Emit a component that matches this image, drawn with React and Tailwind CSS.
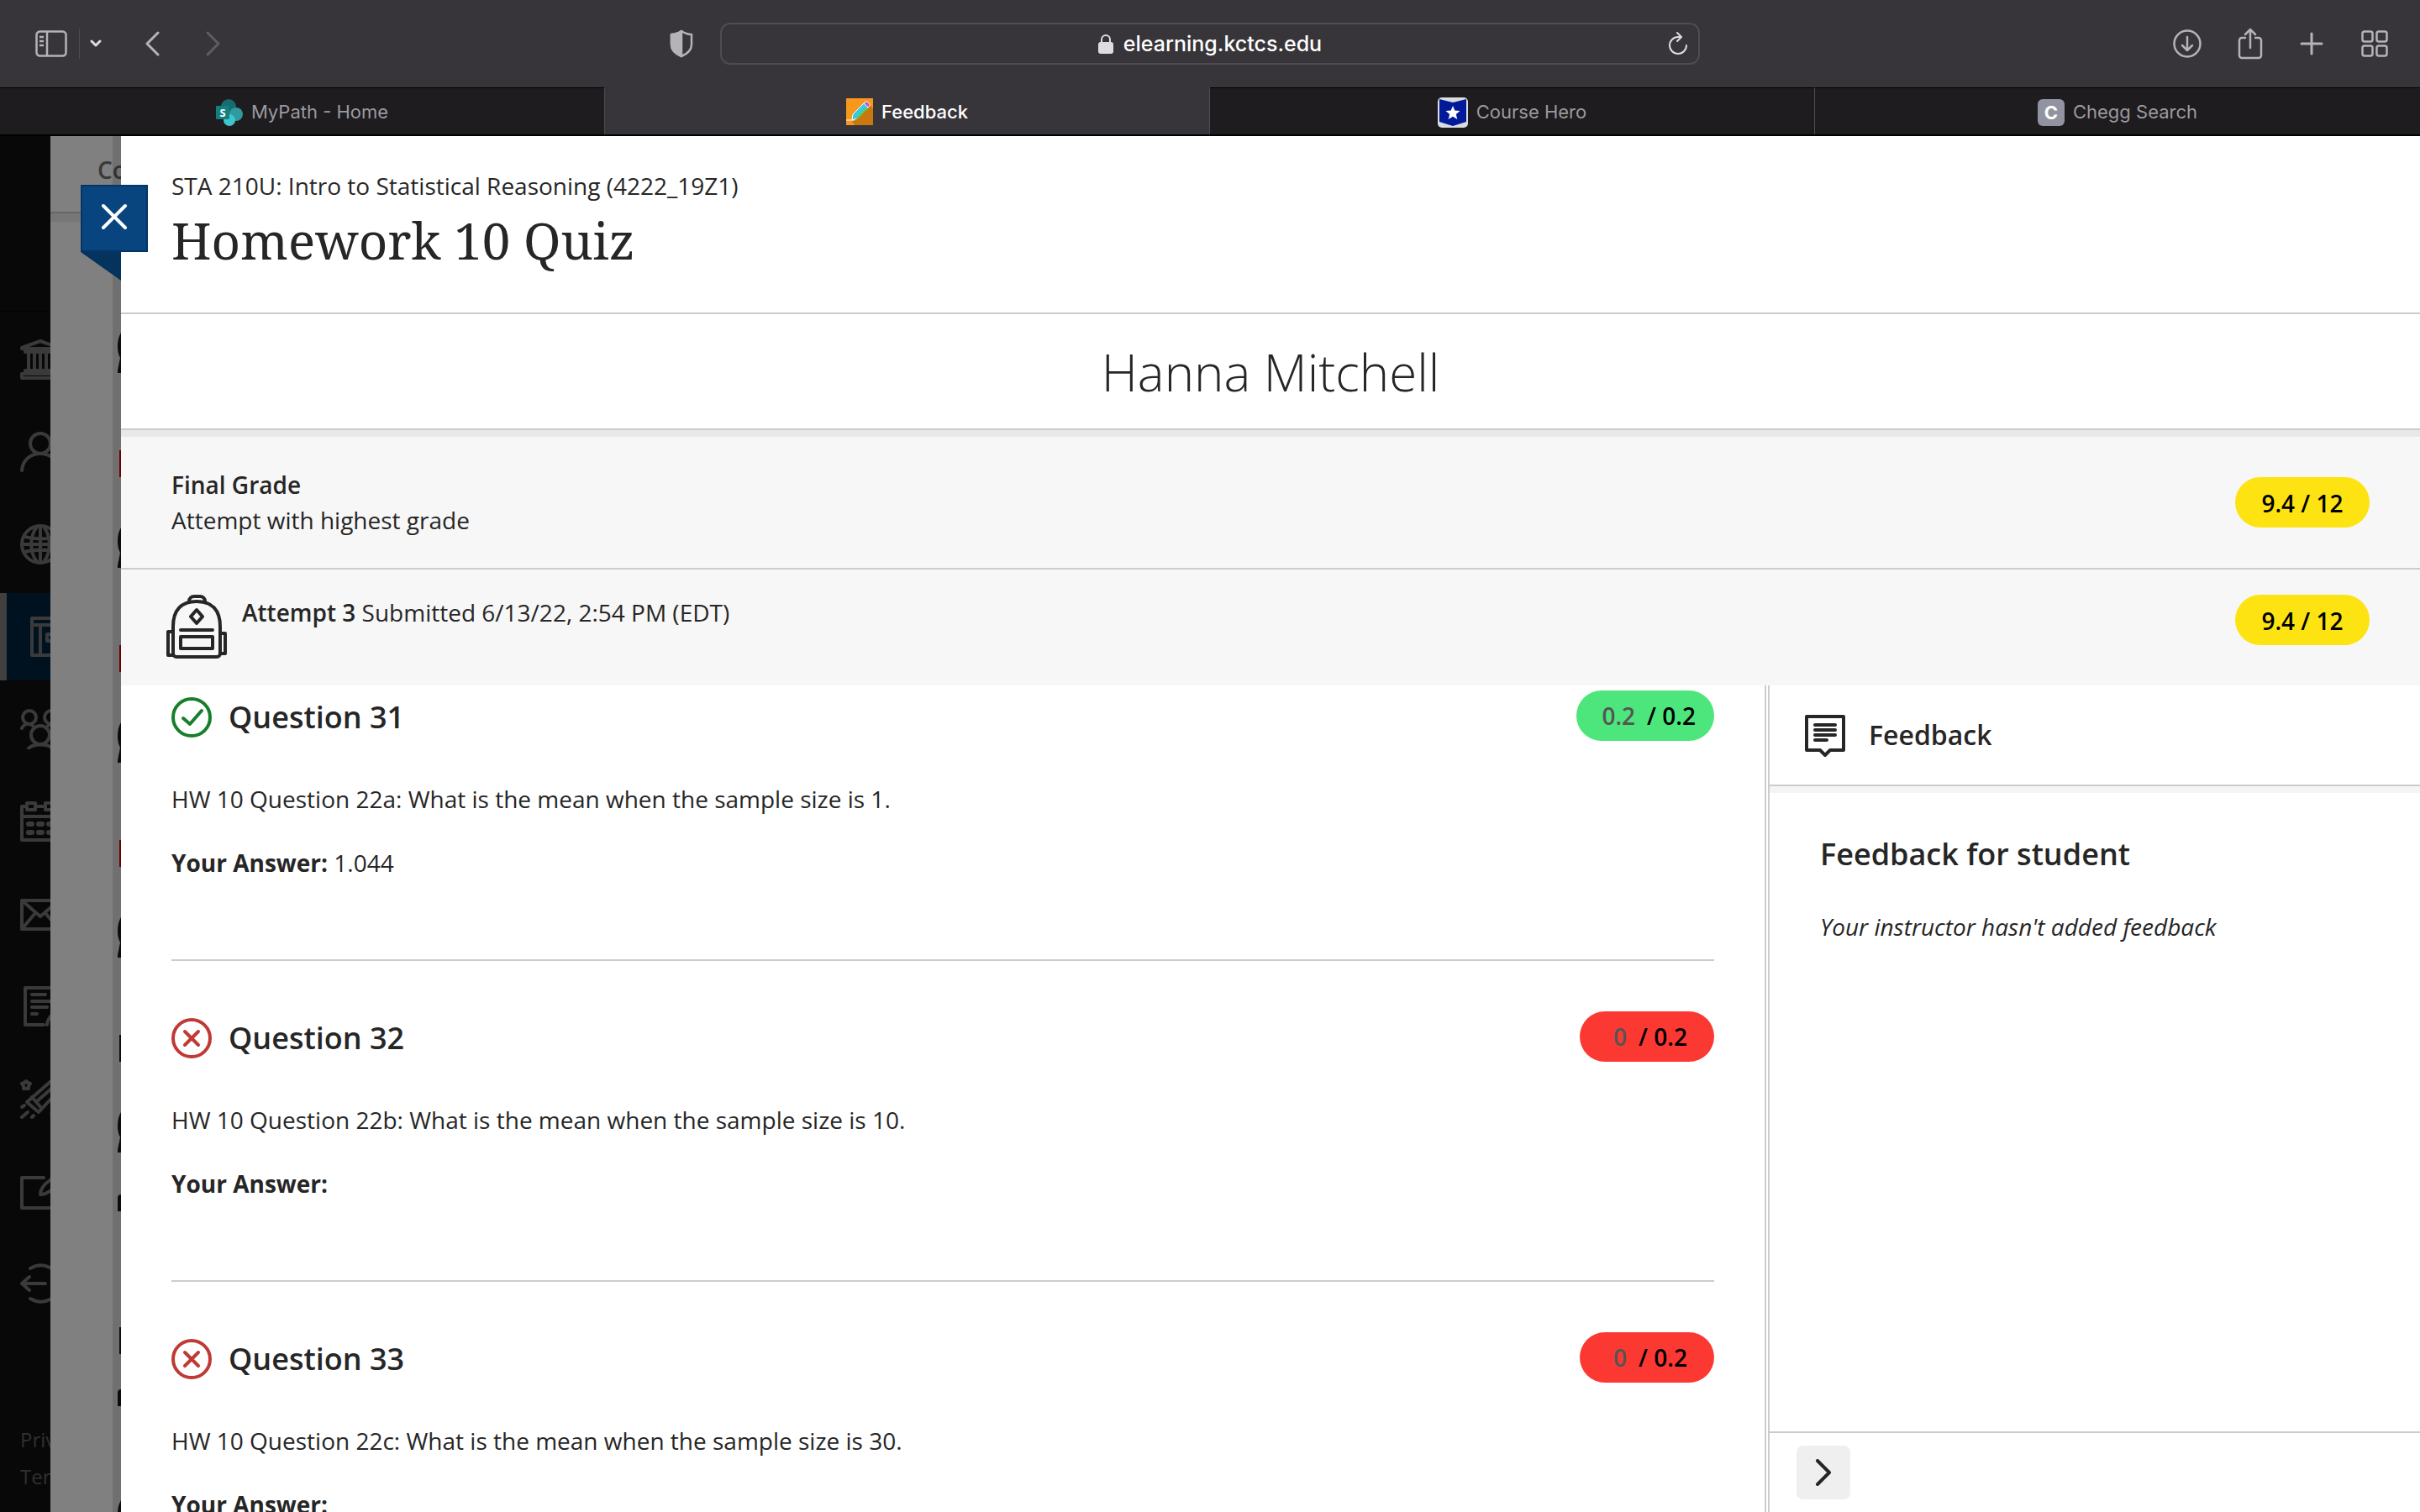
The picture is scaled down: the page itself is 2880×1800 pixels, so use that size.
import React from 'react';

const tabs = [
  { title: 'MyPath - Home', icon: SharePointIcon },
  { title: 'Feedback', icon: PencilIcon, active: true },
  { title: 'Course Hero', icon: CourseHeroIcon },
  { title: 'Chegg Search', icon: CheggIcon },
];

const questions = [
  { number: 31, text: 'HW 10 Question 22a: What is the mean when the sample size is 1.', answer: '1.044', score: '0.2', correct: true },
  { number: 32, text: 'HW 10 Question 22b: What is the mean when the sample size is 10.', answer: '', score: '0', correct: false },
  { number: 33, text: 'HW 10 Question 22c: What is the mean when the sample size is 30.', answer: '', score: '0', correct: false },
];

const navItems = [
  {
    label: 'Institution Page',
    icon: (
      <>
        <path d="M2 10 24 2l22 8v1H2zM6 11v4h36v-4M10 15v22M17 15v22M24 15v22M31 15v22M38 15v22M6 37h36v4M6 37v4M2 41h44v5H2z" />
      </>
    ),
  },
  {
    label: 'Profile',
    icon: (
      <>
        <circle cx="24" cy="14" r="12" />
        <path d="M2 46c1-12 10-20 22-20s21 8 22 20" />
      </>
    ),
  },
  {
    label: 'Activity Stream',
    icon: (
      <>
        <circle cx="24" cy="24" r="22" />
        <path d="M24 2v44M2 24h44M5 15c12 3 26 3 38 0M5 33c12-3 26-3 38 0M20 3c-9 12-9 30 0 42M28 3c9 12 9 30 0 42" />
      </>
    ),
  },
  {
    label: 'Courses',
    active: true,
    icon: <path d="M2 2h40v44H2zM2 10h40M12 10v36M42 21H20v8h22" />,
  },
  {
    label: 'Organizations',
    icon: (
      <>
        <circle cx="11" cy="10" r="8" />
        <circle cx="37" cy="10" r="8" />
        <circle cx="24" cy="31" r="11" />
        <path d="M2 23c2-5 8-7 13-3M46 23c-2-5-8-7-13-3M10 47c5-6 23-6 28 0" />
      </>
    ),
  },
  {
    label: 'Calendar',
    icon: (
      <>
        <path d="M2 6h6M18 6h12M40 6h6v40H2V6M2 18h44M8 2h10v8H8zM30 2h10v8H30z" />
        <path d="M10 27h4M22 27h4M34 27h4M10 37h4M22 37h4M34 37h4" strokeWidth="6" />
      </>
    ),
  },
  {
    label: 'Messages',
    icon: <path d="M2 8h44v34H2zM2 8l22 19L46 8M2 42l16-19M46 42 30 23" />,
  },
  {
    label: 'Grades',
    icon: <path d="M28 46H6V2h34v20M14 10h16M14 18h22M14 25h18M14 33h6M32 46c0-6 4-10 8-14" />,
  },
  {
    label: 'Assist',
    icon: (
      <>
        <path d="M8 28 38 2l10 10-26 28zM14 22l12 14M20 27 44 6" />
        <path d="m7 3 2 2 3 1-2 3v3H4V9L2 6l3-1z" />
        <path d="m2 34 3-2M2 46l7-6M14 46l2-2M38 38c0 4-2 8 2 9" />
      </>
    ),
  },
  {
    label: 'Tools',
    icon: <path d="M28 8H2v36h40V28M24 28c0-8 8-16 20-22l4 4C40 22 32 28 24 28z" />,
  },
  {
    label: 'Sign Out',
    icon: <path d="M12 6c16-9 34 0 34 18S28 51 12 42M30 24H2M11 16 2 24l9 8" />,
  },
];

// edges of the course list that peek out from under the open panel
const listEdges = [
  { type: 'ribbon', space: 'mt-[234px]' },
  { type: 'late', space: 'mt-[92px]' },
  { type: 'ribbon', space: 'mt-[60px]' },
  { type: 'late', space: 'mt-[92px]' },
  { type: 'ribbon', space: 'mt-[60px]' },
  { type: 'late', space: 'mt-[92px]' },
  { type: 'ribbon', space: 'mt-[60px]' },
  { type: 'bar', space: 'mt-[92px]' },
  { type: 'ribbon', space: 'mt-[60px]' },
  { type: 'foot', space: 'mt-[50px]' },
  { type: 'bar', space: 'mt-[138px]' },
  { type: 'foot', space: 'mt-[42px]' },
  { type: 'ribbon', space: 'mt-[112px]' },
];

function SharePointIcon() {
  return (
    <svg width="32" height="32" viewBox="0 0 32 32" aria-hidden="true">
      <circle cx="15" cy="9" r="9" fill="#166c6f" />
      <circle cx="24" cy="18" r="8" fill="#2f9a9f" />
      <circle cx="16" cy="25" r="7" fill="#3fc5cf" />
      <rect x="0" y="8" width="16" height="16" rx="1" fill="#12807f" />
      <text x="8" y="21" textAnchor="middle" fontSize="13" fontWeight="700" fill="#fff" fontFamily="Open Sans, sans-serif">S</text>
    </svg>
  );
}

function PencilIcon() {
  return (
    <svg width="32" height="32" viewBox="0 0 32 32" aria-hidden="true">
      <path d="M0 0h32v32H0z" fill="#f7981d" />
      <path d="M28 8 32 12v20H10L6 26z" fill="#c9770f" />
      <path d="m8 19 13-13 5 5-13 13-6 2z" fill="#35c8e8" stroke="#fff" strokeWidth="1" />
      <path d="m11 23 13-13 2 2-13 13z" fill="#4fd06b" />
      <path d="m21 6 2-2c2-1 6 3 5 5l-2 2z" fill="#c25bc8" stroke="#fff" strokeWidth="1" />
      <path d="M0 26h10" stroke="#fff" strokeWidth="1" />
    </svg>
  );
}

function CourseHeroIcon() {
  return (
    <svg width="36" height="36" viewBox="0 0 36 36" aria-hidden="true">
      <rect width="36" height="36" rx="5" fill="#dcdcde" />
      <path d="M2 2 18 6l16-4v27l-16 5-16-5z" fill="#001a99" />
      <path d="m18 10 2.300 5.500 6.200.4-4.700 4 1.500 6.100-5.300-3.300-5.300 3.300 1.500-6.100-4.700-4 6.200-.4z" fill="#fff" />
    </svg>
  );
}

function CheggIcon() {
  return (
    <span className="flex h-8 w-8 items-center justify-center rounded-md bg-[#9293a0] text-[22px] font-bold leading-8 text-white">C</span>
  );
}

function BrowserToolbar() {
  return (
    <div className="grid h-[104px] grid-cols-[1fr_1166px_1fr] items-center text-[#b5b3b8]">
      <div className="flex items-center pl-[42px] pr-8">
        <button aria-label="Show sidebar">
          <svg width="38" height="32" viewBox="0 0 38 32" fill="none" stroke="currentColor" strokeWidth="2.500">
            <rect x="1.500" y="1.500" width="35" height="29" rx="4" />
            <path d="M14 2v28M5 8h5M5 13h5M5 18h5" />
          </svg>
        </button>
        <span className="ml-[14px] h-9 w-px bg-[#4e4c51]" />
        <button aria-label="Tab groups" className="ml-3 text-[#dddce0]">
          <svg width="14" height="10" viewBox="0 0 14 10" fill="none" stroke="currentColor" strokeWidth="3" strokeLinecap="round" strokeLinejoin="round">
            <path d="m2 2 5 5 5-5" />
          </svg>
        </button>
        <button aria-label="Back" className="ml-[52px]">
          <svg width="17" height="30" viewBox="0 0 17 30" fill="none" stroke="currentColor" strokeWidth="3" strokeLinecap="round" strokeLinejoin="round">
            <path d="M15 2 2 15l13 13" />
          </svg>
        </button>
        <button aria-label="Forward" className="ml-[55px] text-[#5f5d62]">
          <svg width="17" height="30" viewBox="0 0 17 30" fill="none" stroke="currentColor" strokeWidth="3" strokeLinecap="round" strokeLinejoin="round">
            <path d="m2 2 13 13L2 28" />
          </svg>
        </button>
        <button aria-label="Privacy report" className="ml-auto">
          <svg width="28" height="34" viewBox="0 0 28 34" fill="none" stroke="currentColor" strokeWidth="2.500" strokeLinejoin="round">
            <path d="M14 2c3 2 7 4 12 4v12c0 7-5 11-12 14C7 29 2 25 2 18V6c5 0 9-2 12-4z" />
            <path d="M14 2v30C7 29 2 25 2 18V6c5 0 9-2 12-4z" fill="currentColor" />
          </svg>
        </button>
      </div>
      <div className="flex h-[50px] items-center rounded-xl border-2 border-[#4e4c51] px-3 text-[#dddce0]">
        <span className="w-6" />
        <div className="flex flex-1 items-center justify-center gap-3">
          <svg width="18" height="24" viewBox="0 0 18 24" aria-hidden="true">
            <path d="M4 11V7a5 5 0 0 1 10 0v4" fill="none" stroke="currentColor" strokeWidth="2" />
            <rect x="0" y="10" width="18" height="14" rx="3" fill="currentColor" />
          </svg>
          <input
            aria-label="Address"
            defaultValue="elearning.kctcs.edu"
            className="field-sizing-content bg-transparent text-[25px] font-medium leading-8 text-white outline-none"
          />
        </div>
        <button aria-label="Reload">
          <svg width="24" height="28" viewBox="0 0 24 28" fill="none" stroke="currentColor" strokeWidth="2" strokeLinecap="round" strokeLinejoin="round">
            <path d="M12 6a10 10 0 1 0 10 10M12 6h3M11 1l5 5-5 5" />
          </svg>
        </button>
      </div>
      <div className="flex items-center justify-end pr-[38px]">
        <button aria-label="Downloads">
          <svg width="34" height="34" viewBox="0 0 34 34" fill="none" stroke="currentColor" strokeWidth="2.500" strokeLinecap="round" strokeLinejoin="round">
            <circle cx="17" cy="17" r="15.500" />
            <path d="M17 9v16M11 19l6 6 6-6" />
          </svg>
        </button>
        <button aria-label="Share" className="ml-[43px]">
          <svg width="30" height="38" viewBox="0 0 30 38" fill="none" stroke="currentColor" strokeWidth="2.500" strokeLinecap="round" strokeLinejoin="round">
            <path d="M9 12H5a3 3 0 0 0-3 3v18a3 3 0 0 0 3 3h20a3 3 0 0 0 3-3V15a3 3 0 0 0-3-3h-4M15 24V2M9 8l6-6 6 6" />
          </svg>
        </button>
        <button aria-label="New tab" className="ml-[44px]">
          <svg width="28" height="28" viewBox="0 0 28 28" fill="none" stroke="currentColor" strokeWidth="3" strokeLinecap="round">
            <path d="M14 2v24M2 14h24" />
          </svg>
        </button>
        <button aria-label="Tab overview" className="ml-[45px]">
          <svg width="32" height="32" viewBox="0 0 32 32" fill="none" stroke="currentColor" strokeWidth="2.500">
            <rect x="1.500" y="1.500" width="12" height="12" rx="2.500" />
            <rect x="18.500" y="1.500" width="12" height="12" rx="2.500" />
            <rect x="1.500" y="18.500" width="12" height="12" rx="2.500" />
            <rect x="18.500" y="18.500" width="12" height="12" rx="2.500" />
          </svg>
        </button>
      </div>
    </div>
  );
}

function TabBar() {
  return (
    <div className="grid h-[58px] grid-cols-4 border-b-2 border-black">
      {tabs.map(({ title, icon: Icon, active }) => (
        <button
          key={title}
          className={
            active
              ? 'flex items-center justify-center gap-2.5 border-r border-[#4e4c51] pt-0.5 text-[22px] font-medium text-white'
              : 'flex items-center justify-center gap-2.5 border-r border-t border-r-[#4e4c51] border-t-black bg-[#1e1c1f] pt-0.5 text-[22px] text-[#9c9a9e] last:border-r-0'
          }
        >
          <Icon />
          <span>{title}</span>
        </button>
      ))}
    </div>
  );
}

function SideNav() {
  return (
    <nav className="flex w-[60px] shrink-0 flex-col overflow-hidden bg-[#080808] text-[#3a3a3a]">
      <div className="h-[210px] shrink-0 border-b-2 border-[#040404]" />
      <ul className="mt-1 space-y-1.5">
        {navItems.map((item) => (
          <li key={item.label}>
            <a
              href="#"
              aria-label={item.label}
              className={
                item.active
                  ? 'flex h-[104px] items-center border-l-8 border-[#404040] bg-[#001120] pl-7'
                  : 'flex h-[104px] items-center pl-6'
              }
            >
              <svg className="shrink-0" width="48" height="48" viewBox="0 0 48 48" fill="none" stroke="currentColor" strokeWidth="4" strokeLinecap="round" strokeLinejoin="round">
                {item.icon}
              </svg>
            </a>
          </li>
        ))}
      </ul>
      <div className="mt-auto flex flex-col pb-5 pl-6 text-2xl leading-[44px] text-[#303030]">
        <a href="#">Priv</a>
        <a href="#">Ter</a>
      </div>
    </nav>
  );
}

function ListEdge({ type, space }) {
  if (type === 'ribbon') {
    return (
      <svg className={`${space} shrink-0`} width="4" height="48" viewBox="0 0 4 48" fill="#0d0c0a" aria-hidden="true">
        <path d="M4 0C1 5 0 10 0 17c0 5 1 9 3 13L0 45v3h4z" />
      </svg>
    );
  }
  if (type === 'late') return <span className={`${space} ml-[2px] h-8 w-[2px] shrink-0 bg-[#6b0000]`} />;
  if (type === 'bar') return <span className={`${space} ml-[2px] h-8 w-[2px] shrink-0 bg-[#0d0c0a]`} />;
  return <span className={`${space} h-5 w-1 shrink-0 rounded-tl bg-[#0d0c0a]`} />;
}

function DimmedSheet() {
  return (
    <div className="relative flex w-[84px] shrink-0 justify-end overflow-hidden bg-[#808080]">
      <div className="absolute inset-x-0 top-0 h-[92px] border-b-2 border-[#666]">
        <span className="block pl-14 pt-[19px] text-[28px] font-semibold leading-[42px] text-[#383838]">Co</span>
      </div>
      <div className="absolute inset-x-0 top-[92px] h-[10px] bg-[#777]" />
      <div className="absolute inset-y-0 right-0 w-[10px] bg-black/12" />
      <div className="relative flex w-1 flex-col overflow-hidden">
        {listEdges.map((edge, i) => (
          <ListEdge key={i} {...edge} />
        ))}
      </div>
    </div>
  );
}

function CloseButton() {
  return (
    <button aria-label="Close" className="absolute -left-12 top-[58px] z-10">
      <svg width="80" height="114" viewBox="0 0 80 114">
        <path d="M0 80h48v34z" fill="#04335e" />
        <rect x="1" y="1" width="78" height="78" fill="#08457f" stroke="#053565" strokeWidth="2" />
        <path d="m27 25 26 26M53 25 27 51" fill="none" stroke="#fff" strokeWidth="4" strokeLinecap="round" />
      </svg>
    </button>
  );
}

function GradePill() {
  return (
    <span className="flex h-[60px] w-40 items-center justify-center rounded-full bg-[#fde311] pt-0.5 text-[28px] font-semibold text-black">
      9.4 / 12
    </span>
  );
}

function Question({ number, text, answer, score, correct }) {
  return (
    <article className="border-b-2 border-[#ccc] pb-[94px] pt-[60px] first:pt-1.5">
      <div className="flex items-center">
        <div className="flex items-center gap-5 pt-[3px]">
          <svg
            className={correct ? 'text-[#177f2c]' : 'text-[#c03a35]'}
            width="48"
            height="48"
            viewBox="0 0 48 48"
            fill="none"
            stroke="currentColor"
            strokeWidth="4"
            strokeLinecap="round"
            strokeLinejoin="round"
          >
            <circle cx="24" cy="24" r="22" />
            {correct ? <path d="m14 25 8 7 14-16" /> : <path d="m16 16 16 16M32 16 16 32" />}
          </svg>
          <h3 className="text-4xl font-semibold leading-[50px]">Question {number}</h3>
        </div>
        <div
          className={
            correct
              ? 'ml-auto flex h-[60px] min-w-40 items-center justify-center gap-3.5 rounded-full bg-[#4de67c] pl-[30px] pr-[22px] text-[28px] font-semibold text-black'
              : 'ml-auto flex h-[60px] min-w-40 items-center justify-center gap-3.5 rounded-full bg-[#fc3832] pl-[30px] pr-[22px] text-[28px] font-semibold text-black'
          }
        >
          <span className="text-[#555]">{score}</span>
          <span>/ 0.2</span>
        </div>
      </div>
      <p className="mt-12 text-[28px] leading-[42px]">{text}</p>
      <p className="mt-[34px] text-[28px] leading-[42px]">
        <strong className="font-bold">Your Answer:</strong> {answer}
      </p>
    </article>
  );
}

function FeedbackPanel() {
  return (
    <aside className="ml-[2px] flex w-[776px] shrink-0 flex-col border-l-2 border-[#ccc]">
      <div className="flex items-center gap-7 border-b-2 border-[#ccc] py-[35px] pl-[42px]">
        <svg width="48" height="56" viewBox="0 0 48 56" className="-my-1" fill="none" stroke="currentColor" strokeWidth="4" strokeLinecap="round" strokeLinejoin="round">
          <path d="M2 6h44v40H30l-6 6-6-6H2z" />
          <path d="M12 16h24M12 22h24M12 28h24M12 34h14" />
        </svg>
        <h2 className="text-[32px] font-semibold leading-[48px]">Feedback</h2>
      </div>
      <div className="h-2 bg-[#f5f5f5]" />
      <div className="flex-1 pl-[60px] pt-12">
        <h3 className="text-4xl font-semibold leading-[50px]">Feedback for student</h3>
        <p className="mt-10 text-[28px] italic leading-[42px]">Your instructor hasn't added feedback</p>
      </div>
      <div className="border-t-2 border-[#ccc] py-[15px] pl-8">
        <button aria-label="Collapse feedback" className="flex h-16 w-16 items-center justify-center rounded-lg bg-[#efefef]">
          <svg width="18" height="32" viewBox="0 0 18 32" fill="none" stroke="currentColor" strokeWidth="4" strokeLinecap="round" strokeLinejoin="round">
            <path d="m2 2 14 14L2 30" />
          </svg>
        </button>
      </div>
    </aside>
  );
}

export default function App() {
  return (
    <div className="flex h-screen flex-col overflow-hidden bg-black font-['Open_Sans','Noto_Sans',sans-serif] text-[#262626]">
      <header className="shrink-0 bg-[#38353a] font-['Inter',sans-serif]">
        <BrowserToolbar />
        <TabBar />
      </header>
      <div className="flex min-h-0 flex-1">
        <SideNav />
        <DimmedSheet />
        <main className="relative flex min-w-0 flex-1 flex-col bg-white">
          <CloseButton />
          <div className="border-b-2 border-[#ccc] pb-[46px] pl-[60px] pt-[38px]">
            <p className="text-[28px] leading-[42px]">STA 210U: Intro to Statistical Reasoning (4222_19Z1)</p>
            <h1 className="mt-1 font-['Noto_Serif','DejaVu_Serif',serif] text-6xl leading-[80px]">Homework 10 Quiz</h1>
          </div>
          <div className="border-b-2 border-[#ccc] pb-[27px] pt-[29px] text-center text-6xl font-light leading-[80px]">Hanna Mitchell</div>
          <div className="h-2 shrink-0 bg-[#e8e8e8]" />
          <section className="flex items-center justify-between border-b-2 border-[#ccc] bg-[#f7f7f7] px-[60px] py-9 text-[28px] leading-[42px]">
            <div>
              <h2 className="font-semibold">Final Grade</h2>
              <p>Attempt with highest grade</p>
            </div>
            <GradePill />
          </section>
          <section className="flex items-start bg-[#f7f7f7] pb-8 pl-[54px] pr-[60px] pt-[30px] text-[28px] leading-[42px]">
            <svg width="72" height="76" viewBox="0 0 72 76" fill="none" stroke="currentColor" strokeWidth="4" strokeLinecap="round" strokeLinejoin="round" aria-hidden="true">
              <path d="M8 38c0-20 10-30 28-30s28 10 28 30v32a4 4 0 0 1-4 4H12a4 4 0 0 1-4-4z" />
              <path d="M27 8c0-4 3-6 6-6h7c3 0 6 2 6 6M8 44H2v28h6M64 46h6v24h-6" />
              <path d="m36 18 7 8-7 8-7-8zM17 42h38M17 50h38v14H17z" />
            </svg>
            <p className="ml-[18px]">
              <span className="font-semibold">Attempt 3</span> Submitted 6/13/22, 2:54 PM (EDT)
            </p>
            <div className="ml-auto">
              <GradePill />
            </div>
          </section>
          <div className="flex min-h-0 flex-1">
            <div className="min-w-0 flex-1 overflow-hidden border-r-2 border-[#ccc] px-[60px]">
              {questions.map((q) => (
                <Question key={q.number} {...q} />
              ))}
            </div>
            <FeedbackPanel />
          </div>
        </main>
      </div>
    </div>
  );
}
